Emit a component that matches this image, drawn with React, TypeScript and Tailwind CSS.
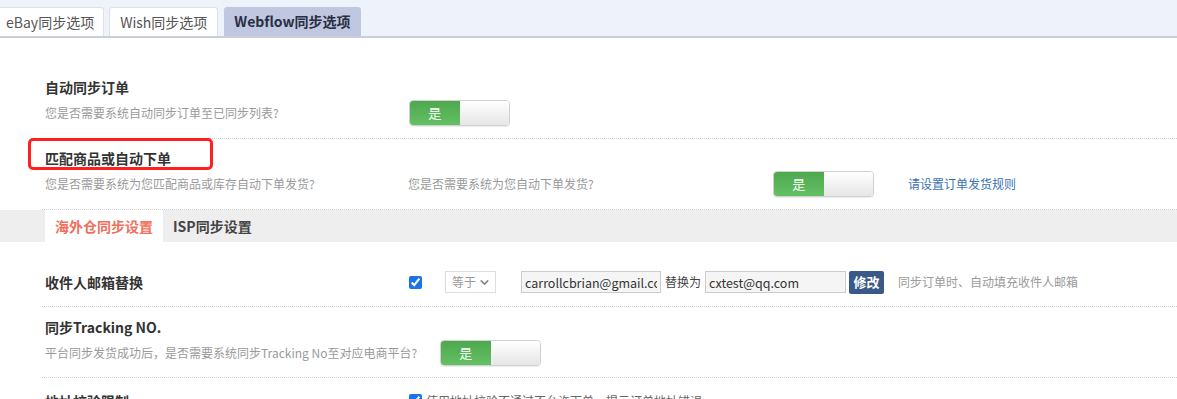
import { ChevronDown } from 'lucide-react';

const font = { fontFamily: '"Noto Sans CJK SC", "Noto Sans", sans-serif' };

function Switch() {
  return (
    <div className="flex h-[26px] w-[101px] shrink-0 overflow-hidden rounded-[4px] border border-[#d0d0d0] shadow-[0_1px_1px_rgba(0,0,0,0.08)]">
      <div className="flex w-1/2 items-center justify-center bg-gradient-to-b from-[#4ea84e] to-[#64c064] text-[13px] text-white">
        是
      </div>
      <div className="w-1/2 bg-gradient-to-b from-white to-[#e6e6e6]" />
    </div>
  );
}

function Divider() {
  return <div className="border-t border-dotted border-[#cfcfcf]" />;
}

export default function App() {
  return (
    <div className="h-[399px] w-[1177px] overflow-hidden bg-white text-[#333]" style={font}>
      {/* top tabs */}
      <div className="flex h-[38px] items-end gap-[5px] border-b-2 border-[#c9ced8] bg-[#eef2fa]">
        <div className="flex h-[29px] items-center rounded-tr-[3px] border border-b-0 border-l-0 border-[#dde2ea] bg-white pl-[6px] pr-[9px] text-[14px] text-[#555]">
          eBay同步选项
        </div>
        <div className="flex h-[29px] items-center rounded-t-[3px] border border-b-0 border-[#dde2ea] bg-white px-[10px] text-[14px] text-[#555]">
          Wish同步选项
        </div>
        <div className="ml-[1px] flex h-[29px] items-center rounded-t-[3px] bg-[#c0c7e0] px-[10px] text-[14px] font-bold text-[#2a2f45]">
          Webflow同步选项
        </div>
      </div>

      <div className="pl-[42px]">
        {/* row 1 */}
        <div className="pt-[39px] pl-[3px]">
          <div className="h-5 text-[14px] font-bold leading-5">自动同步订单</div>
          <div className="mt-[3px] flex h-[26px] items-center">
            <div className="w-[364px] text-[12px] text-[#9a9a9a]">您是否需要系统自动同步订单至已同步列表?</div>
            <Switch />
          </div>
        </div>
        <div className="mt-3">
          <Divider />
        </div>

        {/* row 2 */}
        <div className="pt-[9px] pl-[3px]">
          <div className="relative h-5 text-[14px] font-bold leading-5">
            匹配商品或自动下单
            <div className="absolute -left-[17px] -top-[10px] h-[32px] w-[185px] rounded-[5px] border-[3px] border-[#ff1f1f]" />
          </div>
          <div className="mt-[3px] flex h-[26px] items-center">
            <div className="w-[363px] text-[12px] text-[#9a9a9a]">您是否需要系统为您匹配商品或库存自动下单发货?</div>
            <div className="w-[365px] text-[12px] text-[#9a9a9a]">您是否需要系统为您自动下单发货?</div>
            <Switch />
            <span className="ml-[34px] text-[12px] text-[#3a72b2]">请设置订单发货规则</span>
          </div>
        </div>
      </div>
      <div className="mt-3 pl-[42px]">
        <Divider />
      </div>

      {/* sub tabs */}
      <div className="flex h-8 items-stretch bg-[#eeeeee] pl-[45px]">
        <div className="flex items-center bg-white px-[10px] text-[14px] font-bold text-[#f06f5c]">海外仓同步设置</div>
        <div className="flex items-center px-[10px] text-[14px] font-bold text-[#444]">ISP同步设置</div>
      </div>

      <div className="pl-[42px]">
        {/* row 3 */}
        <div className="mt-[29px] flex h-[22px] items-center pl-[3px]">
          <div className="w-[364px] text-[14px] font-bold">收件人邮箱替换</div>
          <input type="checkbox" defaultChecked className="h-[13px] w-[13px] accent-[#1a73e8]" />
          <div className="ml-[23px] flex h-[22px] w-[51px] items-center justify-between border border-[#dddddd] bg-white pl-[6px] pr-[4px] text-[12px] text-[#999]">
            等于
            <ChevronDown size={13} strokeWidth={3} className="text-[#888]" />
          </div>
          <input
            type="text"
            readOnly
            defaultValue="carrollcbrian@gmail.com"
            className="ml-[25px] h-[22px] w-[140px] border border-[#cccccc] bg-[#f5f5f5] px-[3px] text-[12.5px] text-[#333] outline-none"
          />
          <span className="mx-[4px] text-[12px] text-[#444]">替换为</span>
          <input
            type="text"
            readOnly
            defaultValue="cxtest@qq.com"
            className="h-[22px] w-[141px] border border-[#cccccc] bg-[#f5f5f5] px-[3px] text-[12.5px] text-[#333] outline-none"
          />
          <div className="ml-[3px] flex h-[23px] w-[35px] items-center justify-center rounded-[2px] bg-[#3b5988] text-[13px] font-bold text-white">
            修改
          </div>
          <span className="ml-[14px] text-[12px] text-[#9a9a9a]">同步订单时、自动填充收件人邮箱</span>
        </div>
        <div className="mt-[13px]">
          <Divider />
        </div>

        {/* row 4 */}
        <div className="pt-[10px] pl-[3px]">
          <div className="h-5 text-[14px] font-bold leading-5">同步Tracking NO.</div>
          <div className="mt-[3px] flex h-[26px] items-center">
            <div className="w-[395px] text-[12px] text-[#9a9a9a]">平台同步发货成功后，是否需要系统同步Tracking No至对应电商平台?</div>
            <Switch />
          </div>
        </div>
        <div className="mt-[11px]">
          <Divider />
        </div>

        {/* row 5 (cut off) */}
        <div className="flex items-start pt-[13px] pl-[3px]">
          <div className="w-[364px] text-[14px] font-bold leading-5">地址校验限制</div>
          <input type="checkbox" defaultChecked className="mt-[3px] h-[13px] w-[13px] accent-[#1a73e8]" />
          <span className="ml-[4px] text-[12px] leading-5 text-[#666]">使用地址校验不通过不允许下单，提示订单地址错误</span>
        </div>
      </div>
    </div>
  );
}
